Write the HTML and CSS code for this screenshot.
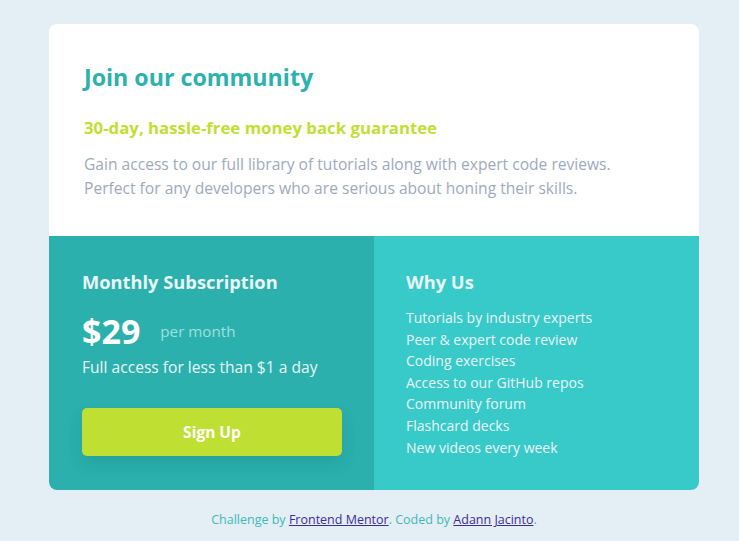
FILE: index.html
```html
<!DOCTYPE html>
<html lang="en">
<head>
<meta charset="utf-8">
<title>Single price grid</title>
<link rel="stylesheet" href="styles.css">
</head>
<body>
<main class="card">
  <section class="top">
    <h1 class="title">Join our community</h1>
    <h2 class="subtitle">30-day, hassle-free money back guarantee</h2>
    <p class="intro">Gain access to our full library of tutorials along with expert code reviews.<br>Perfect for any developers who are serious about honing their skills.</p>
  </section>
  <div class="bottom">
    <section class="sub">
      <h3 class="col-title">Monthly Subscription</h3>
      <div class="price-row"><span class="price">$29</span><span class="per">per month</span></div>
      <p class="access">Full access for less than $1 a day</p>
      <button class="btn">Sign Up</button>
    </section>
    <section class="why">
      <h3 class="col-title">Why Us</h3>
      <ul class="list">
        <li>Tutorials by industry experts</li>
        <li>Peer &amp; expert code review</li>
        <li>Coding exercises</li>
        <li>Access to our GitHub repos</li>
        <li>Community forum</li>
        <li>Flashcard decks</li>
        <li>New videos every week</li>
      </ul>
    </section>
  </div>
</main>
<footer class="attribution">Challenge by <a href="#">Frontend Mentor</a>. Coded by <a href="#">Adann Jacinto</a>.</footer>
</body>
</html>
```
FILE: styles.css
```css
* { box-sizing: border-box; }
html, body { margin: 0; padding: 0; }
body {
  background: #e4eef5;
  font-family: "Open Sans", "Noto Sans", sans-serif;
  padding: 24px 0 0 9px;
  display: flex;
  flex-direction: column;
  align-items: center;
}
.card {
  width: 650px;
  border-radius: 8px;
  overflow: hidden;
  background: #fff;
}
.top {
  padding: 39px 35px 36px;
  height: 212px;
}
.title {
  margin: 0;
  font-size: 23.2px;
  line-height: 28px;
  font-weight: 700;
  color: #2bb1ae;
}
.subtitle {
  margin: 25px 0 0;
  font-size: 16.8px;
  line-height: 24px;
  font-weight: 700;
  color: #bfdf32;
}
.intro {
  margin: 12px 0 0;
  font-size: 15.6px;
  line-height: 24px;
  color: #9ea9bf;
}
.bottom {
  display: flex;
  height: 254px;
}
.sub {
  width: 325px;
  background: #2bb0ad;
  padding: 33px 32px 0 33px;
}
.why {
  flex: 1;
  background: #38c9c9;
  padding: 33px 32px 0 32px;
}
.col-title {
  margin: 0;
  font-size: 18.3px;
  line-height: 26px;
  font-weight: 700;
  color: #e9f6f7;
}
.price-row {
  display: flex;
  align-items: center;
  margin-top: 19px;
  height: 34px;
}
.price {
  font-size: 34px;
  font-weight: 700;
  color: #fff;
}
.per {
  margin-left: 20px;
  font-size: 15.2px;
  color: #9ee0df;
}
.access {
  margin: 7px 0 0;
  font-size: 15.6px;
  line-height: 24px;
  color: #e9f6f7;
}
.btn {
  display: block;
  margin-top: 29px;
  width: 260px;
  height: 48px;
  border: 0;
  border-radius: 5px;
  background: #bfe033;
  color: #fff;
  font-family: inherit;
  font-size: 15.5px;
  font-weight: 700;
  box-shadow: 0 8px 16px rgba(0, 80, 80, 0.14);
}
.list {
  list-style: none;
  margin: 12px 0 0;
  padding: 0;
  font-size: 14px;
  line-height: 21.6px;
  color: #e9f6f7;
}
.attribution {
  margin-top: 21px;
  font-size: 12.5px;
  color: #3fb8b6;
}
.attribution a { color: #3e2c95; }
```
